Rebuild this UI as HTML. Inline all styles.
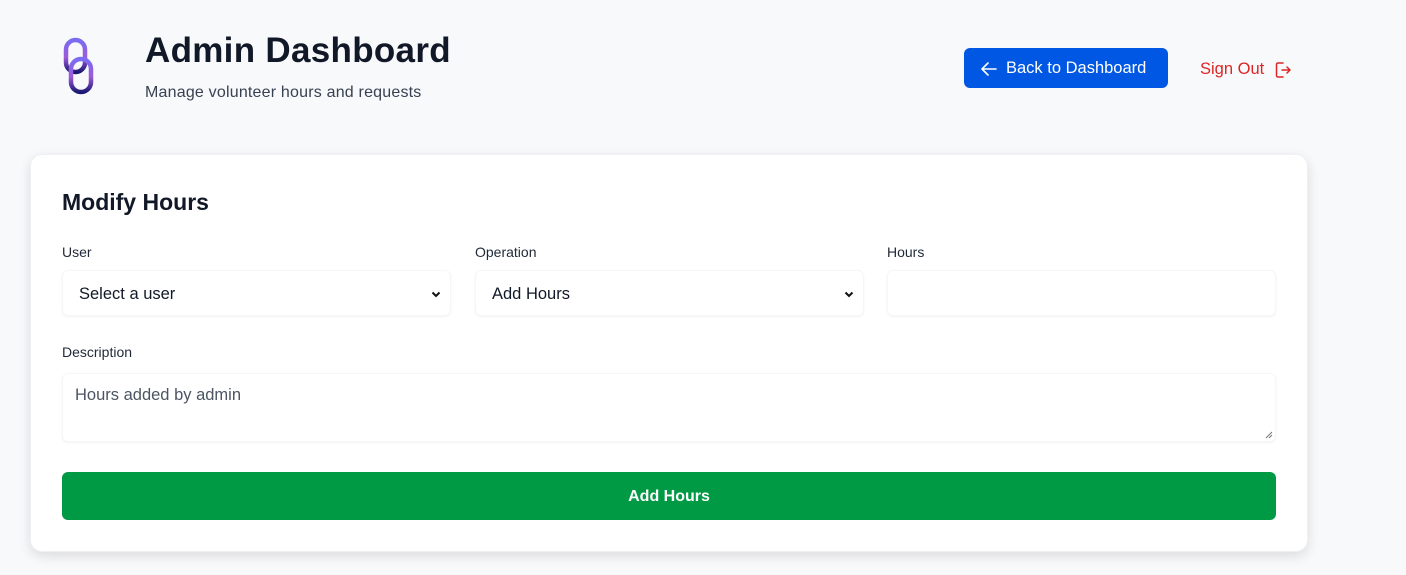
<!DOCTYPE html>
<html><head><meta charset="utf-8">
<style>
*{box-sizing:border-box;margin:0;padding:0}
body{width:1406px;height:575px;background:#f8f9fb;font-family:"Liberation Sans",sans-serif;position:relative;overflow:hidden;color:#111827}
.abs{position:absolute}
h1{position:absolute;left:145px;top:31px;font-size:35px;font-weight:700;color:#111827;letter-spacing:0.3px}
.sub{left:145px;top:84px;font-size:16px;color:#374151;letter-spacing:0.2px}
.back{left:964px;top:48px;width:204px;height:40px;background:#0057e3;border-radius:6px;color:#fff;font-size:16.5px;display:flex;align-items:center;padding-left:16px;gap:8px;padding-top:1px}
.signout{left:1200px;top:60px;color:#dc2626;font-size:16.5px;display:flex;align-items:center;gap:10px}
.card{left:30px;top:154px;width:1278px;height:398px;background:#fff;border-radius:12px;box-shadow:0 4px 12px rgba(0,0,0,0.12);border:1px solid #eef0f3}
h2{position:absolute;left:62px;top:189px;font-size:23px;font-weight:700}
.lbl{font-size:14px;color:#1f2937}
.inp{background:#fff;border-radius:6px;box-shadow:0 1px 2px rgba(0,0,0,0.05);border:1px solid #f5f6f8;font-size:16.5px;color:#111827;display:flex;align-items:center;padding-left:16px;padding-top:3px}
.chev{position:absolute;right:8px;top:17px}
.btn{left:62px;top:472px;width:1214px;height:48px;background:#009a44;border-radius:6px;color:#fff;font-weight:700;font-size:16px;display:flex;align-items:center;justify-content:center;padding-top:2px}
</style></head><body>
<svg class="abs" style="left:60px;top:36px" width="36" height="60" viewBox="0 0 36 60">
<defs><linearGradient id="g" x1="0" y1="0" x2="0" y2="1"><stop offset="0" stop-color="#7a6cf2"/><stop offset="0.55" stop-color="#9d5ad8"/><stop offset="1" stop-color="#1c1874"/></linearGradient></defs>
<rect x="6" y="4" width="19" height="32" rx="9.5" fill="none" stroke="url(#g)" stroke-width="4.5"/>
<rect x="11" y="23" width="20" height="33" rx="10" fill="none" stroke="url(#g)" stroke-width="4.5"/>
</svg>
<h1>Admin Dashboard</h1>
<div class="abs sub">Manage volunteer hours and requests</div>
<div class="abs back"><svg width="18" height="18" viewBox="0 0 18 18"><path d="M16 9H3M8 3L2 9l6 6" fill="none" stroke="#fff" stroke-width="1.6" stroke-linecap="round" stroke-linejoin="round"/></svg>Back to Dashboard</div>
<div class="abs signout">Sign Out <svg width="18" height="18" viewBox="0 0 18 18"><path d="M9 2H4a1.5 1.5 0 0 0-1.5 1.5v11A1.5 1.5 0 0 0 4 16h5M8 9h8M13 6l3 3-3 3" fill="none" stroke="#dc2626" stroke-width="1.5" stroke-linecap="round" stroke-linejoin="round"/></svg></div>
<div class="abs card"></div>
<h2>Modify Hours</h2>
<div class="abs lbl" style="left:62px;top:244px">User</div>
<div class="abs lbl" style="left:475px;top:244px">Operation</div>
<div class="abs lbl" style="left:887px;top:244px">Hours</div>
<div class="abs inp" style="left:62px;top:270px;width:389px;height:46px">Select a user<svg class="chev" width="12" height="12" viewBox="0 0 12 12"><path d="M2.5 4.5L6 8l3.5-3.5" fill="none" stroke="#111" stroke-width="2"/></svg></div>
<div class="abs inp" style="left:475px;top:270px;width:389px;height:46px">Add Hours<svg class="chev" width="12" height="12" viewBox="0 0 12 12"><path d="M2.5 4.5L6 8l3.5-3.5" fill="none" stroke="#111" stroke-width="2"/></svg></div>
<div class="abs inp" style="left:887px;top:270px;width:389px;height:46px"></div>
<div class="abs lbl" style="left:62px;top:344px">Description</div>
<div class="abs inp" style="left:62px;top:373px;width:1214px;height:69px;align-items:flex-start;padding-left:12px;padding-top:12px;color:#4b5563">Hours added by admin
<svg class="abs" style="right:2px;bottom:2px" width="8" height="8" viewBox="0 0 8 8"><path d="M7 1L1 7M7 4L4 7" stroke="#777" stroke-width="1"/></svg></div>
<div class="abs btn">Add Hours</div>
</body></html>
